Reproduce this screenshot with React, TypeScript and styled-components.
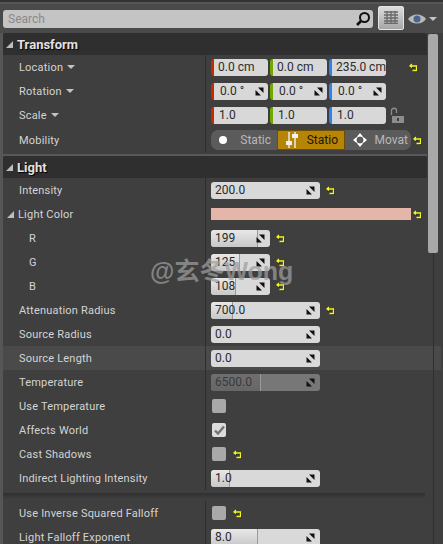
import styled, { createGlobalStyle } from 'styled-components';

const GlobalStyle = createGlobalStyle`
  html, body {
    margin: 0;
    padding: 0;
    background: #3f3f3f;
    overflow: hidden;
  }
`;

const Page = styled.div`
  position: relative;
  width: 443px;
  height: 544px;
  overflow: hidden;
  background: #3f3f3f;
  font-family: Roboto, 'Liberation Sans', sans-serif;
  font-size: 11px;
  color: #d4d4d4;
`;

const TopBar = styled.div`
  height: 33px;
  box-sizing: border-box;
  padding: 3px 0 0 3px;
  display: flex;
  align-items: center;
  background: linear-gradient(#333 0, #333 2px, #565656 2px, #565656 4px, #4a4a4a 4px);
`;

const Search = styled.div`
  width: 370px;
  height: 18px;
  margin-top: 1px;
  box-sizing: border-box;
  padding: 0 2px 0 5px;
  display: flex;
  align-items: center;
  justify-content: space-between;
  background: #c4c4c4;
  border-radius: 3px;
  color: #8a8a8a;
  font-size: 12px;
`;

const GridButton = styled.div`
  width: 26px;
  height: 24px;
  margin: -1px 0 0 5px;
  box-sizing: border-box;
  display: flex;
  align-items: center;
  justify-content: center;
  background: linear-gradient(#dcdcdc, #a6a6a6);
  border: 1px solid #e4e4e4;
  border-radius: 2px;
`;

const EyeBox = styled.div`
  margin: 1px 0 0 4px;
  display: flex;
  align-items: center;
  gap: 3px;
`;

const Body = styled.div`
  display: flex;
  height: 511px;
  background: linear-gradient(to right, #565656 3px, #3f3f3f 3px);
`;

const Content = styled.div`
  width: 424px;
  margin-left: 3px;
  flex: none;
`;

const Track = styled.div`
  position: relative;
  flex: none;
  width: 16px;
  padding-top: 1px;
  background: linear-gradient(to right, transparent 6px, #2f2f2f 6px, #2f2f2f 7px, transparent 7px);
`;

const Thumb = styled.div`
  width: 10px;
  height: 219px;
  margin-left: 1px;
  background: #a8a8a8;
  border-radius: 2px;
`;

const SectionHeader = styled.h2`
  margin: 0;
  height: 22px;
  box-sizing: border-box;
  padding-left: 3px;
  display: flex;
  align-items: center;
  gap: 4px;
  background: #2f2f2f;
  border-radius: 3px 3px 0 0;
  color: #e2e2e2;
  font-size: 13px;
  font-weight: 700;
  text-shadow: 1px 1px 1px #000;
`;

const Corner = styled.span`
  display: inline-block;
  width: 0;
  height: 0;
  border-style: solid;
  border-width: 0 0 7px 7px;
  border-color: transparent transparent #bdbdbd transparent;
`;

const Row = styled.div<{ $hover?: boolean; $tall?: boolean }>`
  height: ${(p) => (p.$tall ? 26 : 24)}px;
  margin-right: ${(p) => (p.$hover ? -14 : 0)}px;
  display: flex;
  align-items: center;
  background: ${(p) => (p.$hover ? '#4a4a4a' : 'transparent')};
`;

const Label = styled.div<{ $indent?: number }>`
  width: 203px;
  height: 100%;
  flex: none;
  box-sizing: border-box;
  padding-left: ${(p) => p.$indent ?? 16}px;
  display: flex;
  align-items: center;
  gap: 4px;
  border-right: 1px solid #2e2e2e;
  letter-spacing: 0.2px;
`;

const Value = styled.div`
  flex: 1;
  padding-left: 5px;
  display: flex;
  align-items: center;
`;

const Caret = styled.span`
  width: 0;
  height: 0;
  border-style: solid;
  border-width: 4px 4px 0 4px;
  border-color: #c4c4c4 transparent transparent transparent;
`;

const AxisField = styled.div<{ $axis: string; $pad?: number }>`
  width: 57px;
  height: 17px;
  margin-right: 2px;
  box-sizing: border-box;
  padding: 0 4px 0 ${(p) => p.$pad ?? 4}px;
  display: flex;
  align-items: center;
  justify-content: space-between;
  white-space: nowrap;
  background: #d8d8d8;
  border-left: 3px solid ${(p) => p.$axis};
  border-radius: 3px;
  color: #2a2a2a;
  font-size: 12px;
`;

const NumberBox = styled.div<{ $w?: number; $disabled?: boolean }>`
  position: relative;
  width: ${(p) => p.$w ?? 109}px;
  height: 17px;
  box-sizing: border-box;
  padding: 0 5px 0 4px;
  display: flex;
  align-items: center;
  justify-content: space-between;
  overflow: hidden;
  background: ${(p) => (p.$disabled ? '#777' : '#d9d9d9')};
  border-radius: 3px;
  color: ${(p) => (p.$disabled ? '#3a3a3a' : '#2a2a2a')};
  font-size: 12px;
`;

const Fill = styled.div<{ $disabled?: boolean }>`
  position: absolute;
  left: 0;
  top: 0;
  bottom: 0;
  background: ${(p) =>
    p.$disabled
      ? 'linear-gradient(#6f6f6f, #666)'
      : 'linear-gradient(#e8e8e8, #c8c8c8)'};
  border-right: 1px solid #9a9a9a;
  border-radius: 3px 0 0 3px;
`;

const BoxText = styled.span`
  position: relative;
  display: inline-flex;
`;

const Swatch = styled.div`
  width: 200px;
  height: 12px;
  background: #e4b6aa;
`;

const CheckBox = styled.div<{ $on?: boolean }>`
  width: 14px;
  height: 14px;
  margin-left: 1px;
  display: flex;
  align-items: center;
  justify-content: center;
  background: ${(p) => (p.$on ? '#dcdcdc' : '#a9a9a9')};
  border-radius: 2px;
`;

const Reset = styled.span<{ $gap?: number }>`
  display: inline-flex;
  margin-left: ${(p) => p.$gap ?? 6}px;
`;

const Lock = styled.span`
  display: inline-flex;
  margin-left: 2px;
`;

const MobilityGroup = styled.div`
  width: 200px;
  height: 20px;
  display: flex;
  overflow: hidden;
  border-radius: 7px;
  background: #5b5b5b;
`;

const MobilityOption = styled.div<{ $active?: boolean }>`
  flex: 1;
  min-width: 0;
  box-sizing: border-box;
  padding: 0 6px 0 8px;
  display: flex;
  align-items: center;
  justify-content: space-between;
  white-space: nowrap;
  background: ${(p) => (p.$active ? '#b78505' : 'transparent')};
  border: ${(p) => (p.$active ? '1px solid #6b4f08' : '0')};
  color: ${(p) => (p.$active ? '#1d1500' : '#b8b8b8')};
  font-size: 12px;
`;

const OptionText = styled.span<{ $tight?: boolean }>`
  margin-right: ${(p) => (p.$tight ? -3 : 0)}px;
`;

const SectionDivider = styled.div`
  height: 2px;
  margin-top: 1px;
  background: #585858;
`;

const AdvancedGap = styled.div`
  height: 11px;
  margin-right: 2px;
  background: linear-gradient(#3f3f3f 0, #3f3f3f 3px, #303030 3px, #3f3f3f 9px);
`;

const Watermark = styled.div`
  position: absolute;
  left: 150px;
  top: 256px;
  color: rgba(158, 158, 158, 0.72);
  font-family: 'Liberation Sans', 'Noto Sans CJK SC', sans-serif;
  font-size: 25px;
  line-height: 30px;
  font-weight: 700;
  white-space: nowrap;
`;

const Spinner = () => (
  <svg width="9" height="9" viewBox="0 0 9 9">
    <path d="M3 0.500H8.500V6ZM0.500 3V8.500H6Z" fill="#111" />
  </svg>
);

const ResetArrow = () => (
  <svg width="9" height="9" viewBox="0 0 9 9">
    <path
      d="M1.500 3H7.500V7.500H3.500M3 1L1 3L3 4.500"
      fill="none"
      stroke="#1c1c1c"
      strokeWidth="1.300"
      transform="translate(0.700 0.700)"
    />
    <path
      d="M1.500 3H7.500V7.500H3.500M3 1L1 3L3 4.500"
      fill="none"
      stroke="#f6f61e"
      strokeWidth="1.300"
    />
  </svg>
);

const Check = () => (
  <svg width="11" height="10" viewBox="0 0 11 10">
    <path d="M1 5.500L4 8.500L10 1.500" fill="none" stroke="#737373" strokeWidth="2.400" />
  </svg>
);

type NumProps = {
  text: string;
  w?: number;
  fill?: number;
  disabled?: boolean;
};

const Num = ({ text, w, fill, disabled }: NumProps) => (
  <NumberBox $w={w} $disabled={disabled}>
    {fill ? <Fill $disabled={disabled} style={{ width: fill }} /> : null}
    <BoxText>{text}</BoxText>
    <BoxText>
      <Spinner />
    </BoxText>
  </NumberBox>
);

const axes = ['#c42a00', '#6fa800', '#2e7ff0'];

const App = () => {
  return (
    <Page>
      <GlobalStyle />
      <TopBar>
        <Search>
          Search
          <svg width="16" height="16" viewBox="0 0 16 16">
            <circle cx="9.500" cy="6.500" r="4.500" fill="none" stroke="#111" strokeWidth="2" />
            <path d="M6 10L2 14" stroke="#111" strokeWidth="2.600" />
          </svg>
        </Search>
        <GridButton>
          <svg width="14" height="13" viewBox="0 0 14 13">
            <path
              d="M0 1h14M0 4h14M0 7h14M0 10h14M0 12.500h14M3 0v13M7 0v13M11 0v13"
              stroke="#6a6a6a"
              strokeWidth="1.300"
            />
          </svg>
        </GridButton>
        <EyeBox>
          <svg width="18" height="12" viewBox="0 0 18 12">
            <path d="M0 6C4 0 14 0 18 6C14 12 4 12 0 6Z" fill="#b9b9b9" />
            <circle cx="9" cy="6" r="3.500" fill="#4a6390" />
          </svg>
          <Caret />
        </EyeBox>
      </TopBar>
      <Body>
        <Content>
          <section>
            <SectionHeader>
              <Corner />
              Transform
            </SectionHeader>
            <Row>
              <Label>
                Location <Caret />
              </Label>
              <Value>
                <AxisField $axis={axes[0]}>0.0 cm</AxisField>
                <AxisField $axis={axes[1]}>0.0 cm</AxisField>
                <AxisField $axis={axes[2]}>235.0 cm</AxisField>
                <Reset $gap={21}>
                  <ResetArrow />
                </Reset>
              </Value>
            </Row>
            <Row>
              <Label>
                Rotation <Caret />
              </Label>
              <Value>
                {axes.map((c) => (
                  <AxisField key={c} $axis={c} $pad={6}>
                    0.0 °
                    <Spinner />
                  </AxisField>
                ))}
              </Value>
            </Row>
            <Row>
              <Label>
                Scale <Caret />
              </Label>
              <Value>
                {axes.map((c) => (
                  <AxisField key={c} $axis={c} $pad={5}>
                    1.0
                  </AxisField>
                ))}
                <Lock>
                  <svg width="14" height="16" viewBox="0 0 14 16">
                    <path d="M1.500 8V3.500C1.500 0.500 6.500 0.500 6.500 3.500V6" fill="none" stroke="#8d8d8d" strokeWidth="1.300" />
                    <rect x="2" y="9" width="12" height="7" fill="#8d8d8d" />
                    <rect x="7" y="11" width="2" height="3" fill="#3f3f3f" />
                  </svg>
                </Lock>
              </Value>
            </Row>
            <Row $tall>
              <Label>Mobility</Label>
              <Value>
                <MobilityGroup>
                  <MobilityOption>
                    <svg width="8" height="8" viewBox="0 0 8 8">
                      <circle cx="4" cy="4" r="4" fill="#fff" />
                    </svg>
                    <OptionText>Static</OptionText>
                  </MobilityOption>
                  <MobilityOption $active>
                    <svg width="12" height="16" viewBox="0 0 12 16">
                      <path d="M3 0v16M9 0v16" stroke="#f1f1f1" strokeWidth="1.400" />
                      <rect x="0" y="9" width="6" height="4" fill="#f1f1f1" />
                      <rect x="6" y="2" width="6" height="4" fill="#f1f1f1" />
                    </svg>
                    <OptionText>Statio</OptionText>
                  </MobilityOption>
                  <MobilityOption>
                    <svg width="14" height="14" viewBox="0 0 14 14">
                      <path d="M7 0L9.500 3H4.500ZM7 14L4.500 11H9.500ZM0 7L3 4.500V9.500ZM14 7L11 9.500V4.500Z" fill="#fff" />
                      <circle cx="7" cy="7" r="4" fill="none" stroke="#fff" />
                    </svg>
                    <OptionText $tight>Movat</OptionText>
                  </MobilityOption>
                </MobilityGroup>
                <Reset $gap={2}>
                  <ResetArrow />
                </Reset>
              </Value>
            </Row>
          </section>
          <SectionDivider />
          <section>
            <SectionHeader>
              <Corner />
              Light
            </SectionHeader>
            <Row>
              <Label>Intensity</Label>
              <Value>
                <Num text="200.0" />
                <Reset>
                  <ResetArrow />
                </Reset>
              </Value>
            </Row>
            <Row>
              <Label $indent={4}>
                <Corner />
                Light Color
              </Label>
              <Value>
                <Swatch />
                <Reset $gap={2}>
                  <ResetArrow />
                </Reset>
              </Value>
            </Row>
            <Row>
              <Label $indent={26}>R</Label>
              <Value>
                <Num text="199" w={59} fill={46} />
                <Reset>
                  <ResetArrow />
                </Reset>
              </Value>
            </Row>
            <Row>
              <Label $indent={26}>G</Label>
              <Value>
                <Num text="125" w={59} fill={28} />
                <Reset>
                  <ResetArrow />
                </Reset>
              </Value>
            </Row>
            <Row>
              <Label $indent={26}>B</Label>
              <Value>
                <Num text="108" w={59} fill={24} />
                <Reset>
                  <ResetArrow />
                </Reset>
              </Value>
            </Row>
            <Row>
              <Label>Attenuation Radius</Label>
              <Value>
                <Num text="700.0" fill={21} />
                <Reset>
                  <ResetArrow />
                </Reset>
              </Value>
            </Row>
            <Row>
              <Label>Source Radius</Label>
              <Value>
                <Num text="0.0" />
              </Value>
            </Row>
            <Row $hover>
              <Label>Source Length</Label>
              <Value>
                <Num text="0.0" />
              </Value>
            </Row>
            <Row>
              <Label>Temperature</Label>
              <Value>
                <Num text="6500.0" fill={49} disabled />
              </Value>
            </Row>
            <Row>
              <Label>Use Temperature</Label>
              <Value>
                <CheckBox />
              </Value>
            </Row>
            <Row>
              <Label>Affects World</Label>
              <Value>
                <CheckBox $on>
                  <Check />
                </CheckBox>
              </Value>
            </Row>
            <Row>
              <Label>Cast Shadows</Label>
              <Value>
                <CheckBox />
                <Reset $gap={7}>
                  <ResetArrow />
                </Reset>
              </Value>
            </Row>
            <Row>
              <Label>Indirect Lighting Intensity</Label>
              <Value>
                <Num text="1.0" fill={18} />
              </Value>
            </Row>
            <AdvancedGap />
            <Row>
              <Label>Use Inverse Squared Falloff</Label>
              <Value>
                <CheckBox />
                <Reset $gap={7}>
                  <ResetArrow />
                </Reset>
              </Value>
            </Row>
            <Row>
              <Label>Light Falloff Exponent</Label>
              <Value>
                <Num text="8.0" fill={46} />
              </Value>
            </Row>
          </section>
        </Content>
        <Track>
          <Thumb />
        </Track>
      </Body>
      <Watermark>@玄冬Wong</Watermark>
    </Page>
  );
};

export default App;
